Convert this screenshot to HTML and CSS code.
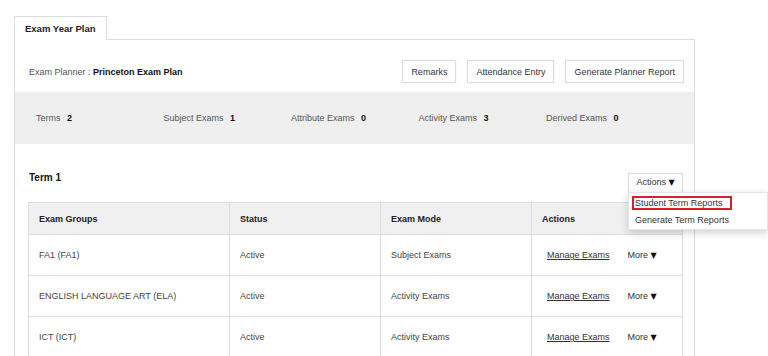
FILE: index.html
```html
<!DOCTYPE html>
<html lang="en">
<head>
  <meta charset="UTF-8">
  <title>Exam Year Plan</title>
  <link rel="stylesheet" href="styles.css">
</head>
<body>
<div class="page">
  <div class="tabs">
    <div class="tab active">Exam Year Plan</div>
  </div>
  <div class="panel">
    <div class="planner-bar">
      <div class="planner-name">Exam Planner : <b>Princeton Exam Plan</b></div>
      <div class="planner-actions">
        <button class="btn">Remarks</button>
        <button class="btn">Attendance Entry</button>
        <button class="btn">Generate Planner Report</button>
      </div>
    </div>

    <div class="stats">
      <div class="stat">Terms <b>2</b></div>
      <div class="stat">Subject Exams <b>1</b></div>
      <div class="stat">Attribute Exams <b>0</b></div>
      <div class="stat">Activity Exams <b>3</b></div>
      <div class="stat">Derived Exams <b>0</b></div>
    </div>

    <div class="term">
      <div class="term-head">
        <h2>Term 1</h2>
        <div class="dropdown">
          <button class="btn btn-actions">Actions <span class="caret">&#9660;</span></button>
          <div class="menu">
            <a class="menu-item highlight">Student Term Reports</a>
            <a class="menu-item">Generate Term Reports</a>
          </div>
        </div>
      </div>

      <table class="exam-table">
        <colgroup>
          <col class="col-group">
          <col class="col-status">
          <col class="col-mode">
          <col class="col-actions">
        </colgroup>
        <thead>
          <tr>
            <th>Exam Groups</th>
            <th>Status</th>
            <th>Exam Mode</th>
            <th>Actions</th>
          </tr>
        </thead>
        <tbody>
          <tr>
            <td>FA1 (FA1)</td>
            <td>Active</td>
            <td>Subject Exams</td>
            <td class="cell-actions"><div class="row-actions"><a class="link">Manage Exams</a><span class="more">More <span class="caret">&#9660;</span></span></div></td>
          </tr>
          <tr>
            <td>ENGLISH LANGUAGE ART (ELA)</td>
            <td>Active</td>
            <td>Activity Exams</td>
            <td class="cell-actions"><div class="row-actions"><a class="link">Manage Exams</a><span class="more">More <span class="caret">&#9660;</span></span></div></td>
          </tr>
          <tr>
            <td>ICT (ICT)</td>
            <td>Active</td>
            <td>Activity Exams</td>
            <td class="cell-actions"><div class="row-actions"><a class="link">Manage Exams</a><span class="more">More <span class="caret">&#9660;</span></span></div></td>
          </tr>
        </tbody>
      </table>
    </div>
  </div>
</div>
</body>
</html>
```

FILE: styles.css
```css
body {
  margin: 0;
  background: #fff;
  font-family: "Liberation Sans", Arial, sans-serif;
  font-size: 9px;
  color: #444;
}
.page {
  padding: 16px 0 0 14px;
}
.tabs {
  display: flex;
}
.tab {
  position: relative;
  z-index: 1;
  width: 93px;
  height: 24px;
  box-sizing: border-box;
  padding-left: 10px;
  line-height: 23px;
  border: 1px solid #ddd;
  border-bottom: none;
  background: #fff;
  font-size: 9.5px;
  font-weight: bold;
  color: #222;
  margin-bottom: -1px;
}
.panel {
  width: 681px;
  box-sizing: border-box;
  border: 1px solid #ddd;
  border-bottom: none;
  min-height: 330px;
}
.planner-bar {
  display: flex;
  justify-content: space-between;
  align-items: center;
  height: 52px;
  box-sizing: border-box;
  padding: 20px 10px 9px 14px;
}
.planner-name {
  color: #555;
}
.planner-name b {
  color: #111;
}
.planner-actions {
  display: flex;
  gap: 11px;
}
.btn {
  height: 23px;
  padding: 0 8px;
  border: 1px solid #ddd;
  background: #fff;
  box-shadow: 0 0 1px rgba(0, 0, 0, 0.15);
  font-family: inherit;
  font-size: 9px;
  color: #333;
  cursor: pointer;
}
.stats {
  display: flex;
  align-items: center;
  height: 52px;
  padding-left: 21px;
  background: #efefef;
}
.stat {
  width: 127.5px;
  color: #555;
}
.stat b {
  margin-left: 4px;
  color: #111;
}
.term {
  padding: 0 11px 0 14px;
}
.term-head {
  display: flex;
  justify-content: space-between;
  align-items: flex-start;
  padding-top: 29px;
  margin-bottom: 9px;
}
.term-head h2 {
  margin: 0;
  font-size: 10px;
  line-height: 10px;
  color: #111;
}
.dropdown {
  position: relative;
}
.btn-actions {
  display: block;
  height: 20px;
  width: 55px;
  padding: 0 0 2px;
}
.caret {
  font-family: "DejaVu Sans", sans-serif;
  font-size: 8px;
  color: #111;
}
.menu {
  position: absolute;
  z-index: 2;
  top: 19px;
  left: 0;
  width: 140px;
  box-sizing: border-box;
  display: flex;
  flex-direction: column;
  align-items: flex-start;
  gap: 3px;
  padding: 3px 3px 2px;
  background: #fff;
  border: 1px solid #e6e6e6;
  box-shadow: 0 3px 8px rgba(0, 0, 0, 0.18);
}
.menu-item {
  padding: 0 8px 0 1px;
  line-height: 10px;
  border: 2px solid transparent;
  color: #333;
  cursor: pointer;
}
.menu-item.highlight {
  border-color: #d3202e;
}
.exam-table {
  width: 654px;
  margin-left: -1px;
  table-layout: fixed;
  border-collapse: collapse;
  border: 1px solid #ddd;
}
.col-group {
  width: 201px;
}
.col-status,
.col-mode,
.col-actions {
  width: 151px;
}
.exam-table th,
.exam-table td {
  border: 1px solid #ddd;
  padding: 0 10px;
  text-align: left;
}
.exam-table th {
  height: 31px;
  background: #f0f0f0;
  font-weight: bold;
  color: #222;
}
.exam-table td {
  height: 40px;
  color: #444;
}
.exam-table td.cell-actions {
  padding-left: 15px;
}
.row-actions {
  display: flex;
  gap: 18px;
}
.link {
  color: #333;
  text-decoration: underline;
  cursor: pointer;
}
.more {
  color: #333;
}
```
